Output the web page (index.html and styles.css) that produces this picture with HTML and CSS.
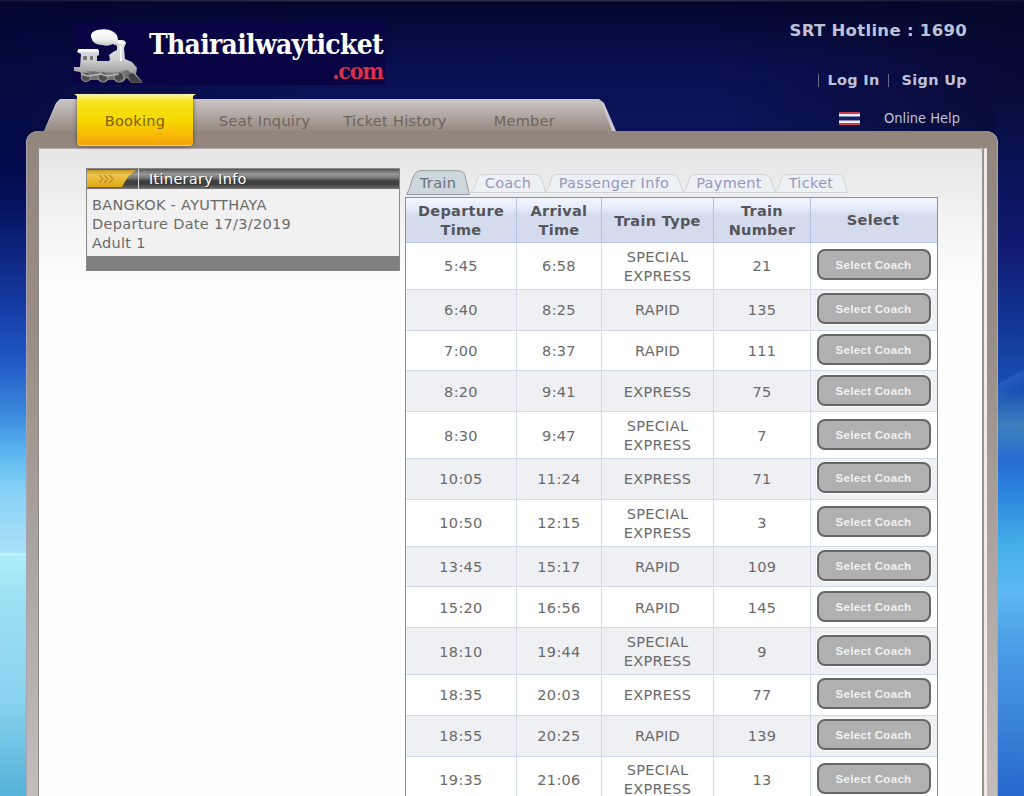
FILE: index.html
```html
<!DOCTYPE html>
<html lang="en">
<head>
  <meta charset="UTF-8" />
  <meta name="viewport" content="width=device-width, initial-scale=1" />
  <title>Thairailwayticket.com</title>
  <link rel="stylesheet" href="styles.css">
</head>
<body>
  <header class="header">
    <div class="logo">
      <svg class="train" width="72" height="63" viewBox="0 0 72 63">
        <defs>
          <linearGradient id="metal" x1="0" y1="0" x2="0" y2="1">
            <stop offset="0" stop-color="#e8e8ec" />
            <stop offset="0.45" stop-color="#cfcfd1" />
            <stop offset="0.75" stop-color="#a2a2a2" />
            <stop offset="1" stop-color="#555" />
          </linearGradient>
          <linearGradient id="smoke" x1="0" y1="0" x2="0" y2="1">
            <stop offset="0" stop-color="#fff" />
            <stop offset="0.6" stop-color="#f2f2f4" />
            <stop offset="1" stop-color="#bdbdc4" />
          </linearGradient>
        </defs>
        <path fill="url(#metal)" d="M5 28H26v5l-2 1v5h12l1-2-1-4 4-3 4-2V19l5-1 4 3-2 5 1 11 7 3 5 6-1 6 6 7v2H58l-4-5-4 4-7-1-5-5-4 5-7-1-4-3-5 3-7-2-4-6-6-1v-4h6l1-13-4-2z" />
        <path fill="url(#smoke)" d="M18 15q-1-5 6-7 10-2 15 1 6 3 6 9 3 0 4 3l-5 3-4-2q-5 3-11 1-9 0-11-8z" />
        <path fill="#f6f6f8" d="M5 27h20v3H5zM44 19q4-2 8 0l1 3h-7zM47 24h2v15h-2z" />
        <path fill="#77777c" d="M10 34h4v4h-4zM17 34h3v4h-3z" />
        <path fill="#707070" d="M8 51q9-3 18-1l18 1 10-3 5 3-8 7H12z" />
        <g fill="#4e4e4e" stroke="#969696" stroke-width="1.200">
          <circle cx="13" cy="55" r="4.500" />
          <circle cx="30" cy="55" r="5" />
          <circle cx="46" cy="55" r="5" />
        </g>
        <path fill="#404044" d="M55 53l5-2 8 9H58z" />
        <path stroke="#b5b5b5" stroke-width="1.500" fill="none" d="M8 52l7 2 13-2 6 2 12-2" />
      </svg>
      <div class="logo-text">
        <span class="logo-name">Thairailwayticket</span>
        <span class="logo-com">.com</span>
      </div>
    </div>
    <div class="top-links">
      <div class="hotline">SRT Hotline : 1690</div>
      <div class="account">
        <i></i><a class="login">Log In</a><i></i><a class="signup">Sign Up</a>
      </div>
      <div class="help">
        <svg width="21" height="13" viewBox="0 0 21 13">
          <path fill="#d03a50" d="M0 0h21v13H0z" />
          <path fill="#eef" d="M0 2h21v9H0z" />
          <path fill="#1c2268" d="M0 4.500h21v4H0z" />
        </svg>
        <a>Online Help</a>
      </div>
    </div>
  </header>

  <div class="nav-edge">
    <nav class="nav">
      <a class="seat">Seat Inquiry</a>
      <a class="history">Ticket History</a>
      <a class="member">Member</a>
    </nav>
  </div>
  <div class="booking-tab">Booking</div>

  <div class="frame">
    <main class="content">
      <aside class="itinerary">
        <div class="itinerary-head">
          <svg width="53" height="20" viewBox="0 0 53 20">
            <defs>
              <linearGradient id="gold" x1="0" y1="0" x2="0" y2="1">
                <stop offset="0" stop-color="#c99a28" />
                <stop offset="0.3" stop-color="#ecc64a" />
                <stop offset="1" stop-color="#e2a915" />
              </linearGradient>
            </defs>
            <path fill="url(#gold)" d="M0 1h50q-8 3-15 17H0z" />
            <path stroke="#b98e2c" stroke-width="1.200" fill="none" d="M12 6l4 4-4 4M17 6l4 4-4 4M22 6l4 4-4 4" />
            <path stroke="#ddd" d="M51.500 0v20" />
          </svg>
          <span>Itinerary Info</span>
        </div>
        <div class="itinerary-body">
          BANGKOK - AYUTTHAYA<br />
          Departure Date 17/3/2019<br />
          Adult 1
        </div>
        <div class="itinerary-foot"></div>
      </aside>

      <section class="trains">
        <div class="tabs">
          <div class="tab active"><svg width="64" height="25" viewBox="0 0 64 25"><path d="M.5 24.500C5 18 5 9 9 3.500Q11 .7 15 .7H52Q57 .7 58.500 4L63.500 24.500z" /></svg><span>Train</span></div>
          <div class="tab coach"><svg width="76" height="19" viewBox="0 0 76 19"><path d="M.5 18.500C6 14 6 5 9 2Q11 .5 14 .5H66Q70 .5 72 6L75.500 18.500z" /></svg><span>Coach</span></div>
          <div class="tab passenger"><svg width="140" height="19" viewBox="0 0 140 19"><path d="M.5 18.500C6 14 6 5 9 2Q11 .5 14 .5H129Q133 .5 135 6L139.500 18.500z" /></svg><span>Passenger Info</span></div>
          <div class="tab payment"><svg width="94" height="19" viewBox="0 0 94 19"><path d="M.5 18.500C6 14 6 5 9 2Q11 .5 14 .5H83Q87 .5 89 6L93.500 18.500z" /></svg><span>Payment</span></div>
          <div class="tab ticket"><svg width="74" height="19" viewBox="0 0 74 19"><path d="M.5 18.500C6 14 6 5 9 2Q11 .5 14 .5H64Q68 .5 70 6L73.500 18.500z" /></svg><span>Ticket</span></div>
        </div>

        <div class="schedule">
          <div class="row head">
            <div>Departure<br />Time</div><div>Arrival<br />Time</div><div>Train Type</div><div>Train<br />Number</div><div>Select</div>
          </div>
          <div class="row tall"><div>5:45</div><div>6:58</div><div>SPECIAL<br />EXPRESS</div><div>21</div><div><button>Select Coach</button></div></div>
          <div class="row"><div>6:40</div><div>8:25</div><div>RAPID</div><div>135</div><div><button>Select Coach</button></div></div>
          <div class="row"><div>7:00</div><div>8:37</div><div>RAPID</div><div>111</div><div><button>Select Coach</button></div></div>
          <div class="row"><div>8:20</div><div>9:41</div><div>EXPRESS</div><div>75</div><div><button>Select Coach</button></div></div>
          <div class="row tall"><div>8:30</div><div>9:47</div><div>SPECIAL<br />EXPRESS</div><div>7</div><div><button>Select Coach</button></div></div>
          <div class="row"><div>10:05</div><div>11:24</div><div>EXPRESS</div><div>71</div><div><button>Select Coach</button></div></div>
          <div class="row tall"><div>10:50</div><div>12:15</div><div>SPECIAL<br />EXPRESS</div><div>3</div><div><button>Select Coach</button></div></div>
          <div class="row"><div>13:45</div><div>15:17</div><div>RAPID</div><div>109</div><div><button>Select Coach</button></div></div>
          <div class="row"><div>15:20</div><div>16:56</div><div>RAPID</div><div>145</div><div><button>Select Coach</button></div></div>
          <div class="row tall"><div>18:10</div><div>19:44</div><div>SPECIAL<br />EXPRESS</div><div>9</div><div><button>Select Coach</button></div></div>
          <div class="row"><div>18:35</div><div>20:03</div><div>EXPRESS</div><div>77</div><div><button>Select Coach</button></div></div>
          <div class="row"><div>18:55</div><div>20:25</div><div>RAPID</div><div>139</div><div><button>Select Coach</button></div></div>
          <div class="row tall"><div>19:35</div><div>21:06</div><div>SPECIAL<br />EXPRESS</div><div>13</div><div><button>Select Coach</button></div></div>
        </div>
      </section>
    </main>
  </div>
</body>
</html>
```
FILE: styles.css
```css
* {
  box-sizing: border-box;
}

body {
  margin: 0;
  height: 796px;
  overflow: hidden;
  position: relative;
  font-family: "DejaVu Sans", Verdana, sans-serif;
  font-size: 14.500px;
  letter-spacing: .3px;
  line-height: 19px;
  color: #6a6a6a;
  background:
    linear-gradient(transparent, transparent 90px, #03094c 170px, #061462 210px, #1538a0 300px, #1f58c4 360px, #3c8ade 415px, #58b4ee 450px, #86d2f6 490px, #a3dcf7 540px, #a9e2fa 553px, #c8ffff 554px, #aeeefa 556px, #9de0f4 600px, #88d2ee 700px, #55b2d8 796px) 0 0 / 30px 796px no-repeat,
    linear-gradient(150deg, transparent 46%, rgba(70, 130, 230, .3) 46.500%, transparent 56%) 994px 300px / 30px 170px no-repeat,
    linear-gradient(transparent, transparent 90px, #0a1258 170px, #101a72 250px, #12389a 330px, #1a50b4 390px, #3d80bd 425px, #276cd0 460px, #2d8ade 500px, #43b0e8 545px, #5cb8f2 590px, #4798e4 660px, #2868cc 796px) 994px 0 / 30px 796px no-repeat,
    linear-gradient(90deg, rgba(2, 6, 50, .6), transparent 30%, transparent 70%, rgba(6, 8, 40, .7)),
    linear-gradient(#3a3d52, #03072e 2px, #0a0f52 70px, #0d1459 131px);
}

.header {
  height: 99px;
  padding: 22px 57px 0 73px;
  display: flex;
  justify-content: space-between;
}

.logo {
  width: 312px;
  height: 63px;
  background-color: #090444;
  display: flex;
}

.logo-text {
  width: 238px;
  display: flex;
  flex-direction: column;
  align-items: flex-end;
  font-family: "DejaVu Serif Condensed", "DejaVu Serif", serif;
  font-weight: bold;
  white-space: nowrap;
}

.logo-name {
  margin-top: 7px;
  font-size: 28px;
  line-height: 32px;
  letter-spacing: -.7px;
  color: #fff;
}

.logo-com {
  font-size: 23px;
  line-height: 20px;
  letter-spacing: -1.200px;
  color: #d9304c;
}

.top-links {
  color: #bfc1d6;
  font-weight: bold;
  text-align: right;
}

.hotline {
  margin-top: -1px;
  font-size: 16.500px;
  white-space: nowrap;
}

.account {
  margin-top: 31px;
  display: flex;
  justify-content: flex-end;
  align-items: center;
}

.account i {
  width: 1px;
  height: 13px;
  background-color: #666a8c;
}

.login {
  margin: 0 8px;
}

.signup {
  margin-left: 13px;
}

.help {
  margin: 19px 7px 0 0;
  display: flex;
  justify-content: flex-end;
  align-items: center;
  gap: 24px;
  font-family: "DejaVu Sans Condensed", "DejaVu Sans", sans-serif;
  font-weight: normal;
  letter-spacing: 0;
}

.nav-edge {
  width: 572px;
  height: 32px;
  margin-left: 44px;
  padding-top: 1px;
  background-color: #c9c8d0;
  clip-path: polygon(0 100%, 12px 4px, 16px 0, 555px 0, 560px 4px, 572px 100%);
}

.nav {
  width: 568px;
  height: 31px;
  padding: 12px 0 0 175px;
  display: flex;
  color: #6e635b;
  background: linear-gradient(#cac5c2, #968a81);
  clip-path: polygon(0 100%, 13px 4px, 17px 0, 555px 0, 558px 4px, 568px 100%);
  white-space: nowrap;
}

.history {
  margin-left: 33px;
}

.member {
  margin-left: 47px;
}

/* hangs over the edge of the frame */
.booking-tab {
  position: absolute;
  z-index: 2;
  left: 77px;
  top: 95px;
  width: 116px;
  height: 51px;
  padding-top: 17px;
  text-align: center;
  color: #7d6414;
  background: linear-gradient(#f8f2a0, #f5e520 6px, #f6d800 25px, #f8b008 44px, #f6a60c);
  border-radius: 0 0 4px 4px;
  border-bottom: 1px solid #fbd77a;
  box-shadow: 0 0 4px rgba(60, 40, 20, .7);
}

.booking-tab::before {
  content: "";
  position: absolute;
  left: -3px;
  top: -1px;
  width: 116px;
  border-top: 2px solid #f6f0ae;
  border-left: 3px solid transparent;
  border-right: 3px solid transparent;
}

.frame {
  width: 972px;
  height: 665px;
  margin-left: 26px;
  padding: 17px 11px 0 12px;
  border-radius: 12px 12px 0 0;
  background: linear-gradient(#93877d, #988d84 200px, #aaa29c 400px, #c3bebc 665px);
  box-shadow: inset 1px 0 #a7a5b5, inset -1px 0 #a7a5c5;
}

.content {
  height: 648px;
  padding: 19px 45px 0 47px;
  display: flex;
  gap: 5px;
  border-top: 1px solid #b0aaa6;
  border-left: 1px solid #8d8986;
  border-right: 3px solid #f0ebe6;
  box-shadow: inset -2px 0 #999390;
  background: linear-gradient(#e6e6e6, #e9e9e9 20px, #f6f6f6 90px, #fefefe 140px);
}

.itinerary {
  width: 314px;
  height: 103px;
  border: 1px solid #888;
  background-color: #f1f1f1;
}

.itinerary-head {
  height: 20px;
  display: flex;
  align-items: center;
  color: #fff;
  background: linear-gradient(#555, #999 5px, #777 9px, #3c3c3c 12px, #444 16px, #777);
}

.itinerary-head span {
  margin-left: 9px;
  text-shadow: 1px 1px #333;
}

.itinerary-body {
  height: 67px;
  padding: 7px 5px 0;
}

.itinerary-foot {
  height: 15px;
  background-color: #808080;
}

.trains {
  width: 533px;
}

.tabs {
  height: 29px;
  padding: 2px 0 0 1px;
  display: flex;
  align-items: flex-start;
}

.tab {
  height: 19px;
  margin-top: 4px;
  display: grid;
  place-items: center;
  color: #9697bd;
}

.tab > * {
  grid-area: 1 / 1;
}

.tab path {
  fill: #eef1f4;
  stroke: #cfd2d6;
}

.tab + .tab {
  margin-left: -2px;
}

.tab.active {
  height: 25px;
  margin-top: 0;
  color: #68727c;
}

.tab.active span {
  margin-top: 2px;
}

.tab.active path {
  fill: #cdd6db;
  stroke: #929ca6;
}

.tab.active + .coach {
  margin-left: 0;
}

.schedule {
  border: 1px solid #7c92ac;
  border-bottom: 0;
  background-color: #fff;
}

.row {
  height: 40.800px;
  display: grid;
  grid-template-columns: 111px 85px 112px 97px 126px;
  border-bottom: 1px solid #d3daea;
}

.row.tall {
  height: 46.800px;
}

.row > div {
  display: flex;
  align-items: center;
  justify-content: center;
  text-align: center;
  padding-top: 2px;
  border-right: 1px solid #d6dbe9;
}

.row > div:last-child {
  border-right: 0;
  padding: 0 1px 2px 0;
}

.row:nth-child(odd) {
  background-color: #eff0f4;
}

.row.head {
  height: 45px;
  font-weight: bold;
  color: #55565c;
  background: linear-gradient(#f2f6fe, #e2eafa 12px, #d5dcec 16px, #d3dbee);
  border-bottom-color: #b9c7de;
}

.row.head > div {
  border-right-color: #b2c5e0;
}

.row.head > div:last-child {
  border-right: 0;
  padding: 0 2px 0 0;
}

button {
  width: 114px;
  height: 31px;
  padding: 1px 0 0;
  font: bold 11.500px "Liberation Sans", Arial, sans-serif;
  letter-spacing: .3px;
  color: #f2f2f2;
  background-color: #b0b0b0;
  border: 2px solid #666;
  border-radius: 8px;
  box-shadow: 0 0 0 1px #fff;
}
```
